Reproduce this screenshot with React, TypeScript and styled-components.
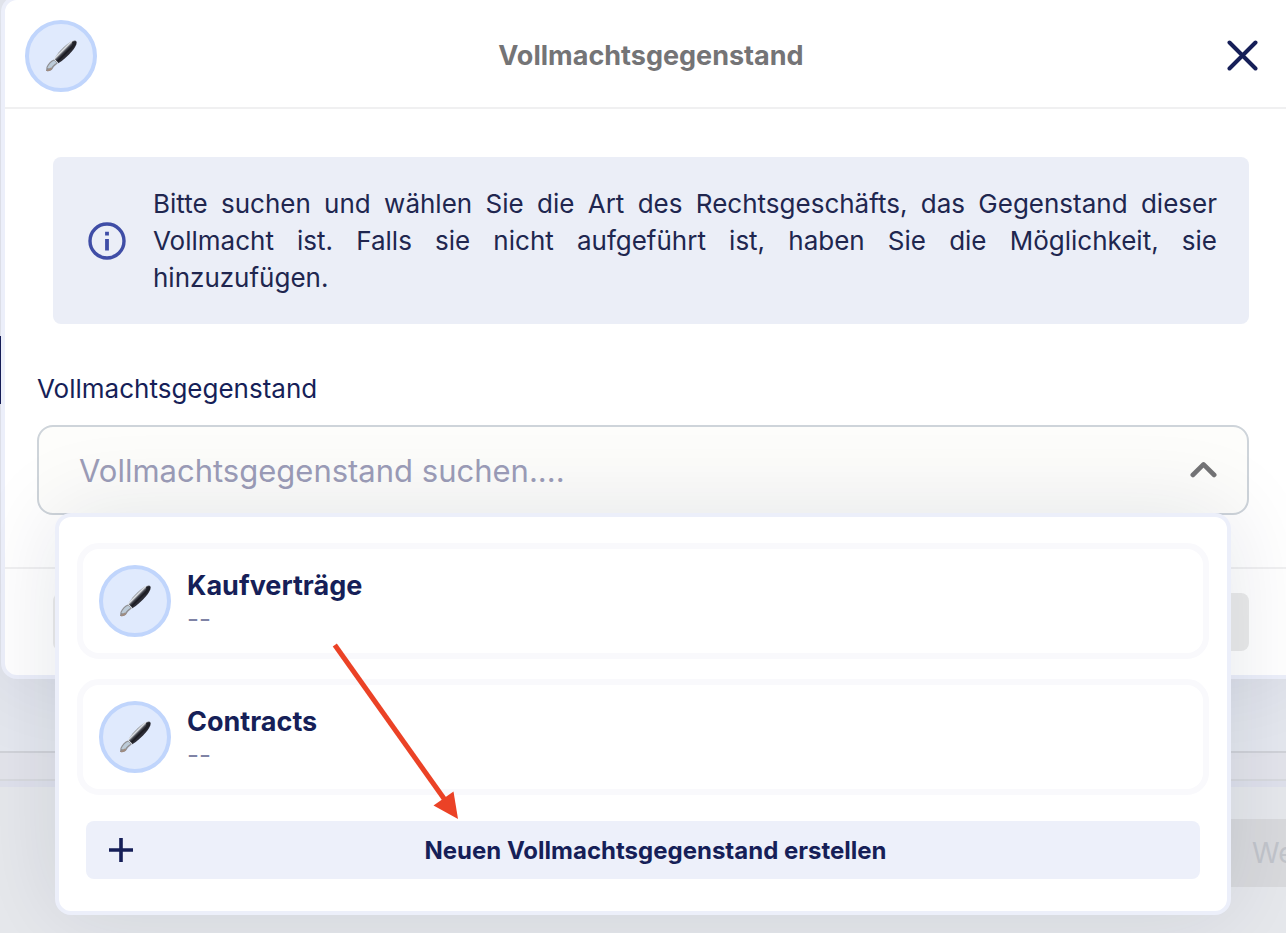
import React, { useId } from "react";
import styled, { createGlobalStyle } from "styled-components";

const navy = "#161f58";

const GlobalStyle = createGlobalStyle`
  *, *::before, *::after { box-sizing: border-box; }
  body {
    margin: 0;
    overflow: hidden;
    background: #e6e8ec;
    color: ${navy};
    font-family: Inter, "Liberation Sans", sans-serif;
  }
  button, input { font: inherit; color: inherit; }
  button { border: 0; background: none; padding: 0; }
  h1, h2, p, ul { margin: 0; padding: 0; }
`;

const Page = styled.div`
  position: relative;
  display: flex;
  flex-direction: column;
  min-height: 100vh;
  overflow: hidden;
`;

const PageContent = styled.div`
  padding-top: 336px;
  height: 751px;
  background: #e6e9f0;
`;

const ActiveMarker = styled.div`
  width: 1px;
  height: 68px;
  background: ${navy};
`;

const PageStrip = styled.div`
  height: 36px;
  background: #e3e4eb;
  border-top: 2px solid #d1d3d9;
  border-bottom: 6px solid #dfe1ec;
  box-shadow: inset 0 -2px #d8dadf;
`;

const PageFooter = styled.div`
  display: flex;
  justify-content: flex-end;
  padding: 32px 0;
`;

const NextButton = styled.button`
  width: 90px;
  height: 68px;
  padding-left: 56px;
  overflow: hidden;
  background: #d9dadd;
  color: #c2c5cb;
  font-size: 28px;
  text-align: left;
`;

const Modal = styled.div`
  position: absolute;
  top: -4px;
  left: 1px;
  right: -15px;
  background: #fff;
  border: 4px solid #eceffa;
  border-radius: 16px;
  box-shadow: 0 0 100px rgba(20, 26, 60, 0.09);
`;

const ModalHeader = styled.header`
  display: grid;
  grid-template-columns: 1fr auto 1fr;
  align-items: center;
  padding: 20px 20px 15px;
  border-bottom: 2px solid #f0f0f1;
`;

const ModalTitle = styled.h1`
  color: #747476;
  font-size: 27px;
  line-height: 36px;
  font-weight: 700;
`;

const CloseButton = styled.button`
  display: grid;
  place-items: center;
  justify-self: end;
  width: 70px;
  height: 72px;
`;

const ModalBody = styled.div`
  padding: 48px 48px 52px 32px;
`;

const Notice = styled.div`
  display: flex;
  align-items: center;
  gap: 26px;
  margin-left: 16px;
  padding: 28px 32px 28px 34px;
  border-radius: 8px;
  background: #ebeef7;
`;

const NoticeText = styled.p`
  flex: 1;
  color: #20264f;
  font-size: 26px;
  line-height: 37px;
  text-align: justify;
`;

const FieldLabel = styled.label`
  display: block;
  margin: 47px 0 18px;
  font-size: 26px;
  line-height: 36px;
`;

const Combobox = styled.div`
  position: relative;
`;

const FieldFrame = styled.div`
  display: flex;
  align-items: center;
  height: 90px;
  padding: 0 24px 0 40px;
  border: 2px solid #ced4da;
  border-radius: 16px;
  background: #fdfdfb;
`;

const SearchInput = styled.input`
  flex: 1;
  min-width: 0;
  padding: 0;
  border: 0;
  outline: 0;
  background: transparent;
  font-size: 31px;
  &::placeholder { color: #9c9db8; opacity: 1; }
`;

const ToggleButton = styled.button`
  display: grid;
  place-items: center;
  width: 38px;
  height: 48px;
`;

const Dropdown = styled.div`
  position: absolute;
  top: 88px;
  left: 18px;
  right: 18px;
  z-index: 1;
  padding: 26px 18px 32px;
  border: 4px solid #eceffa;
  border-radius: 16px;
  background: #fff;
  box-shadow: 0 0 90px rgba(20, 26, 60, 0.11);
`;

const OptionList = styled.ul`
  display: flex;
  flex-direction: column;
  gap: 20px;
  list-style: none;
`;

const Option = styled.li`
  display: flex;
  align-items: center;
  gap: 16px;
  height: 116px;
  padding: 0 16px;
  border: 6px solid #f9f9fc;
  border-radius: 22px;
`;

const OptionTitle = styled.h2`
  font-size: 27px;
  line-height: 36px;
  font-weight: 700;
`;

const OptionDetail = styled.p`
  color: #7f83a5;
  font-size: 26px;
  line-height: 30px;
`;

const CreateButton = styled.button`
  display: flex;
  align-items: center;
  width: calc(100% - 18px);
  height: 58px;
  margin: 26px 9px 0;
  padding: 0 22px 0 23px;
  border-radius: 8px;
  background: #edf0fa;
  font-size: 24px;
  font-weight: 700;
`;

const CreateText = styled.span`
  flex: 1;
  text-align: center;
`;

const ModalFooter = styled.footer`
  padding: 24px 48px;
  border-top: 2px solid #f0f0f1;
`;

const SubmitButton = styled.button`
  display: block;
  width: 100%;
  height: 58px;
  border-radius: 8px;
  background: #ebebeb;
`;

const Badge = styled.span`
  display: grid;
  place-items: center;
  flex: none;
  width: 72px;
  height: 72px;
  border: 4px solid #c0d5fc;
  border-radius: 50%;
  background: #e0eafd;
`;

const Pointer = styled.svg`
  position: absolute;
  top: 126px;
  left: 273px;
  pointer-events: none;
`;

function PenBadge() {
  const id = useId();
  return (
    <Badge>
      <svg width="32" height="32" viewBox="0 0 32 32" aria-hidden="true">
        <defs>
          <linearGradient id={id} x1="16" y1="8" x2="22" y2="14" gradientUnits="userSpaceOnUse">
            <stop offset="0" stopColor="#54585f" />
            <stop offset="0.15" stopColor="#8c9096" />
            <stop offset="0.35" stopColor="#e4e7ea" />
            <stop offset="0.55" stopColor="#4a4c55" />
            <stop offset="0.8" stopColor="#17171d" />
            <stop offset="1" stopColor="#2c2c35" />
          </linearGradient>
        </defs>
        <path d="M1 31L1.5 27C3 23.500 6 20.500 9 19.5L13 23C11.500 24.500 9 26 7.8 28.5C6.5 31 4 31.4 1 31Z" fill="#8f8f92" />
        <path d="M2.300 28C4 24 7 21.2 9.2 20.5L11.8 22.8C8.8 24.2 7 26.5 5.8 28.8Z" fill="#bccbd8" />
        <path d="M1 31L5.8 27.6L7.3 28.8C6 31 3.4 31.4 1 31Z" fill="#a08c80" />
        <path d="M9 19.5C11 14 20.5 4.8 25.5 1.7C28 .2 31 .3 31.5 1.8C32.2 4.2 29.6 8 27.2 11C22.8 16 17.8 20.8 13.3 23.3Z" fill={`url(#${id})`} />
        <path d="M27 2C28.500 1.200 30.500 1.4 30.8 2.5C31 5 27.5 8.8 25.5 10.8C26 8 28.500 5 27 2Z" fill="#202127" />
        <path d="M9.2 19.3L13.2 22.9" stroke="#dfe3e7" strokeWidth="1" />
      </svg>
    </Badge>
  );
}

const options = [
  { title: "Kaufverträge", detail: "--" },
  { title: "Contracts", detail: "--" },
];

export default function App() {
  return (
    <>
      <GlobalStyle />
      <Page>
        <PageContent>
          <ActiveMarker />
        </PageContent>
        <PageStrip />
        <PageFooter>
          <NextButton type="button" disabled>Weiter</NextButton>
        </PageFooter>

        <Modal role="dialog" aria-labelledby="dialog-title">
          <ModalHeader>
            <PenBadge />
            <ModalTitle id="dialog-title">Vollmachtsgegenstand</ModalTitle>
            <CloseButton type="button" aria-label="Schließen">
              <svg width="32" height="32" viewBox="0 0 32 32" fill="none" stroke={navy} strokeWidth="4" strokeLinecap="round">
                <path d="M3.500 2.500L29.500 28.500M29.500 2.500L3.500 28.500" />
              </svg>
            </CloseButton>
          </ModalHeader>

          <ModalBody>
            <Notice>
              <svg width="40" height="40" viewBox="0 0 40 40" fill="none" aria-hidden="true">
                <circle cx="20" cy="20" r="17" stroke="#3f4da6" strokeWidth="3.4" />
                <path d="M20 18V29.4M20 10.8V14.6" stroke="#3f4da6" strokeWidth="3.8" />
              </svg>
              <NoticeText>
                Bitte suchen und wählen Sie die Art des Rechtsgeschäfts, das Gegenstand dieser
                Vollmacht ist. Falls sie nicht aufgeführt ist, haben Sie die Möglichkeit, sie
                hinzuzufügen.
              </NoticeText>
            </Notice>

            <FieldLabel htmlFor="subject-search">Vollmachtsgegenstand</FieldLabel>
            <Combobox>
              <FieldFrame>
                <SearchInput
                  id="subject-search"
                  type="text"
                  role="combobox"
                  aria-expanded="true"
                  aria-controls="subject-options"
                  placeholder="Vollmachtsgegenstand suchen...."
                />
                <ToggleButton type="button" aria-label="Liste schließen">
                  <svg width="28" height="18" viewBox="0 0 28 18" fill="none" stroke="#747476" strokeWidth="4.6" strokeLinecap="round" strokeLinejoin="round">
                    <path d="M2.8 14L13.500 3.4L24.2 14" />
                  </svg>
                </ToggleButton>
              </FieldFrame>
              <Dropdown>
                <OptionList id="subject-options">
                  {options.map((option) => (
                    <Option key={option.title}>
                      <PenBadge />
                      <div>
                        <OptionTitle>{option.title}</OptionTitle>
                        <OptionDetail>{option.detail}</OptionDetail>
                      </div>
                    </Option>
                  ))}
                </OptionList>
                <CreateButton type="button">
                  <svg width="24" height="24" viewBox="0 0 24 24" stroke={navy} strokeWidth="3.6" aria-hidden="true">
                    <path d="M12 0V24M0 12H24" />
                  </svg>
                  <CreateText>Neuen Vollmachtsgegenstand erstellen</CreateText>
                </CreateButton>
                <Pointer width="130" height="180" viewBox="0 0 130 180" aria-hidden="true">
                  <path d="M2.8 2L113 157" stroke="#eb4226" strokeWidth="5" />
                  <path d="M126 176L101.500 162.500L121.500 148.500Z" fill="#eb4226" />
                </Pointer>
              </Dropdown>
            </Combobox>
          </ModalBody>

          <ModalFooter>
            <SubmitButton type="button" aria-label="Speichern" disabled />
          </ModalFooter>
        </Modal>
      </Page>
    </>
  );
}
